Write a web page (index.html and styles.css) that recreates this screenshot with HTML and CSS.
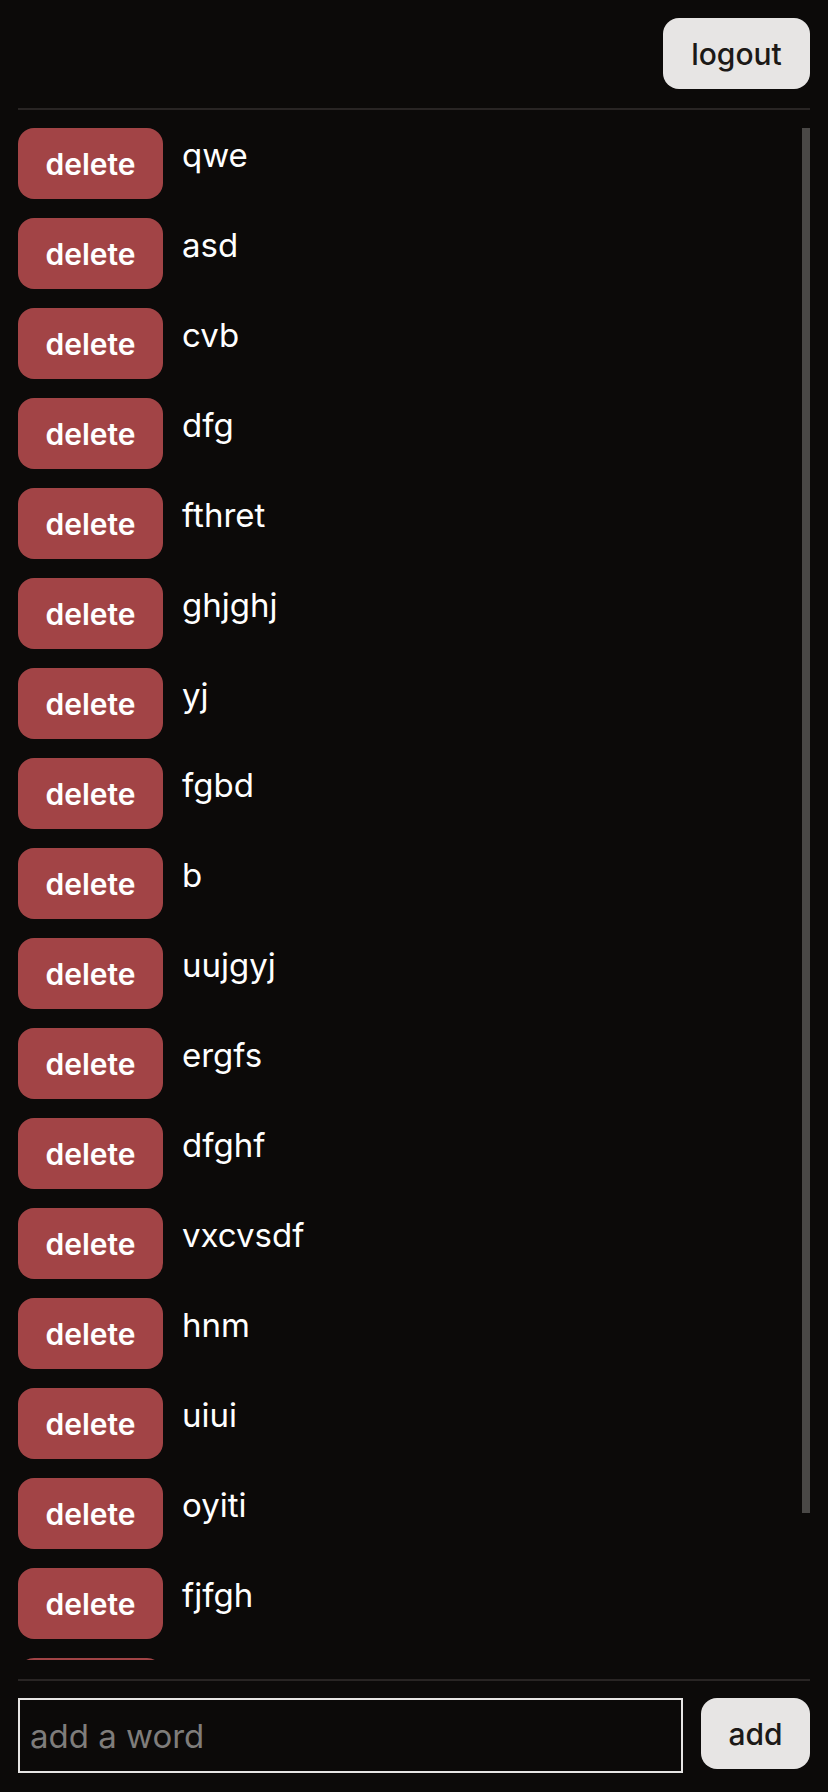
FILE: index.html
```html
<!DOCTYPE html>
<html lang="en">
<head>
<meta charset="utf-8">
<title>words</title>
<link rel="stylesheet" href="styles.css">
</head>
<body>
<div class="app">
  <header class="top">
    <button class="btn-light logout">logout</button>
  </header>
  <div class="list-wrap">
    <ul class="list">
      <li class="row"><button class="btn-del">delete</button><span class="word">qwe</span></li>
      <li class="row"><button class="btn-del">delete</button><span class="word">asd</span></li>
      <li class="row"><button class="btn-del">delete</button><span class="word">cvb</span></li>
      <li class="row"><button class="btn-del">delete</button><span class="word">dfg</span></li>
      <li class="row"><button class="btn-del">delete</button><span class="word">fthret</span></li>
      <li class="row"><button class="btn-del">delete</button><span class="word">ghjghj</span></li>
      <li class="row"><button class="btn-del">delete</button><span class="word">yj</span></li>
      <li class="row"><button class="btn-del">delete</button><span class="word">fgbd</span></li>
      <li class="row"><button class="btn-del">delete</button><span class="word">b</span></li>
      <li class="row"><button class="btn-del">delete</button><span class="word">uujgyj</span></li>
      <li class="row"><button class="btn-del">delete</button><span class="word">ergfs</span></li>
      <li class="row"><button class="btn-del">delete</button><span class="word">dfghf</span></li>
      <li class="row"><button class="btn-del">delete</button><span class="word">vxcvsdf</span></li>
      <li class="row"><button class="btn-del">delete</button><span class="word">hnm</span></li>
      <li class="row"><button class="btn-del">delete</button><span class="word">uiui</span></li>
      <li class="row"><button class="btn-del">delete</button><span class="word">oyiti</span></li>
      <li class="row"><button class="btn-del">delete</button><span class="word">fjfgh</span></li>
      <li class="row"><button class="btn-del">delete</button><span class="word">sdf</span></li>
      <li class="row"><button class="btn-del">delete</button><span class="word">xcv</span></li>
    </ul>
    <div class="thumb"></div>
  </div>
  <form class="bottom" onsubmit="return false">
    <input class="field" type="text" placeholder="add a word">
    <button class="btn-light add" type="submit">add</button>
  </form>
</div>
</body>
</html>
```
FILE: styles.css
```css
* { box-sizing: border-box; }
html, body { margin: 0; padding: 0; height: 100%; }
body {
  background: #0c0a09;
  color: #ffffff;
  font-family: Inter, "Liberation Sans", sans-serif;
}
.app {
  height: 1792px;
  padding: 18px 18px 19px;
  display: flex;
  flex-direction: column;
}
.top {
  display: flex;
  justify-content: flex-end;
  padding-bottom: 19px;
  border-bottom: 2px solid #292524;
  flex: none;
}
.btn-light {
  background: #e7e5e4;
  color: #1c1917;
  border: none;
  border-radius: 16px;
  font-family: Inter, "Liberation Sans", sans-serif;
  font-size: 30px;
  font-weight: 500;
  height: 71px;
  padding: 0;
}
.logout { width: 147px; }
.list-wrap {
  position: relative;
  flex: 1;
  min-height: 0;
  margin: 18px 0 19px;
}
.list {
  list-style: none;
  margin: 0;
  padding: 0;
  height: 100%;
  overflow: hidden;
  display: flex;
  flex-direction: column;
  gap: 19px;
}
.thumb {
  position: absolute;
  top: 0;
  right: 0;
  width: 8px;
  height: 1385px;
  background: #4a4846;
}
.row {
  display: flex;
  align-items: flex-start;
  gap: 19px;
  flex: none;
}
.btn-del {
  flex: none;
  width: 145px;
  height: 71px;
  background: #a24446;
  color: #ffffff;
  border: none;
  border-radius: 16px;
  font-family: Inter, "Liberation Sans", sans-serif;
  font-size: 30px;
  font-weight: 600;
  padding: 0;
}
.word {
  font-size: 33px;
  line-height: 38px;
  padding-top: 8px;
}
.bottom {
  flex: none;
  display: flex;
  align-items: flex-start;
  gap: 18px;
  border-top: 2px solid #292524;
  padding-top: 17px;
  margin: 0;
}
.field {
  flex: 1;
  height: 75px;
  background: transparent;
  border: 2px solid #e7e5e4;
  border-radius: 0;
  color: #ffffff;
  font-family: Inter, "Liberation Sans", sans-serif;
  font-size: 33px;
  padding: 0 10px;
  outline: none;
}
.field::placeholder { color: #7f7d7b; }
.add { width: 109px; }
```
